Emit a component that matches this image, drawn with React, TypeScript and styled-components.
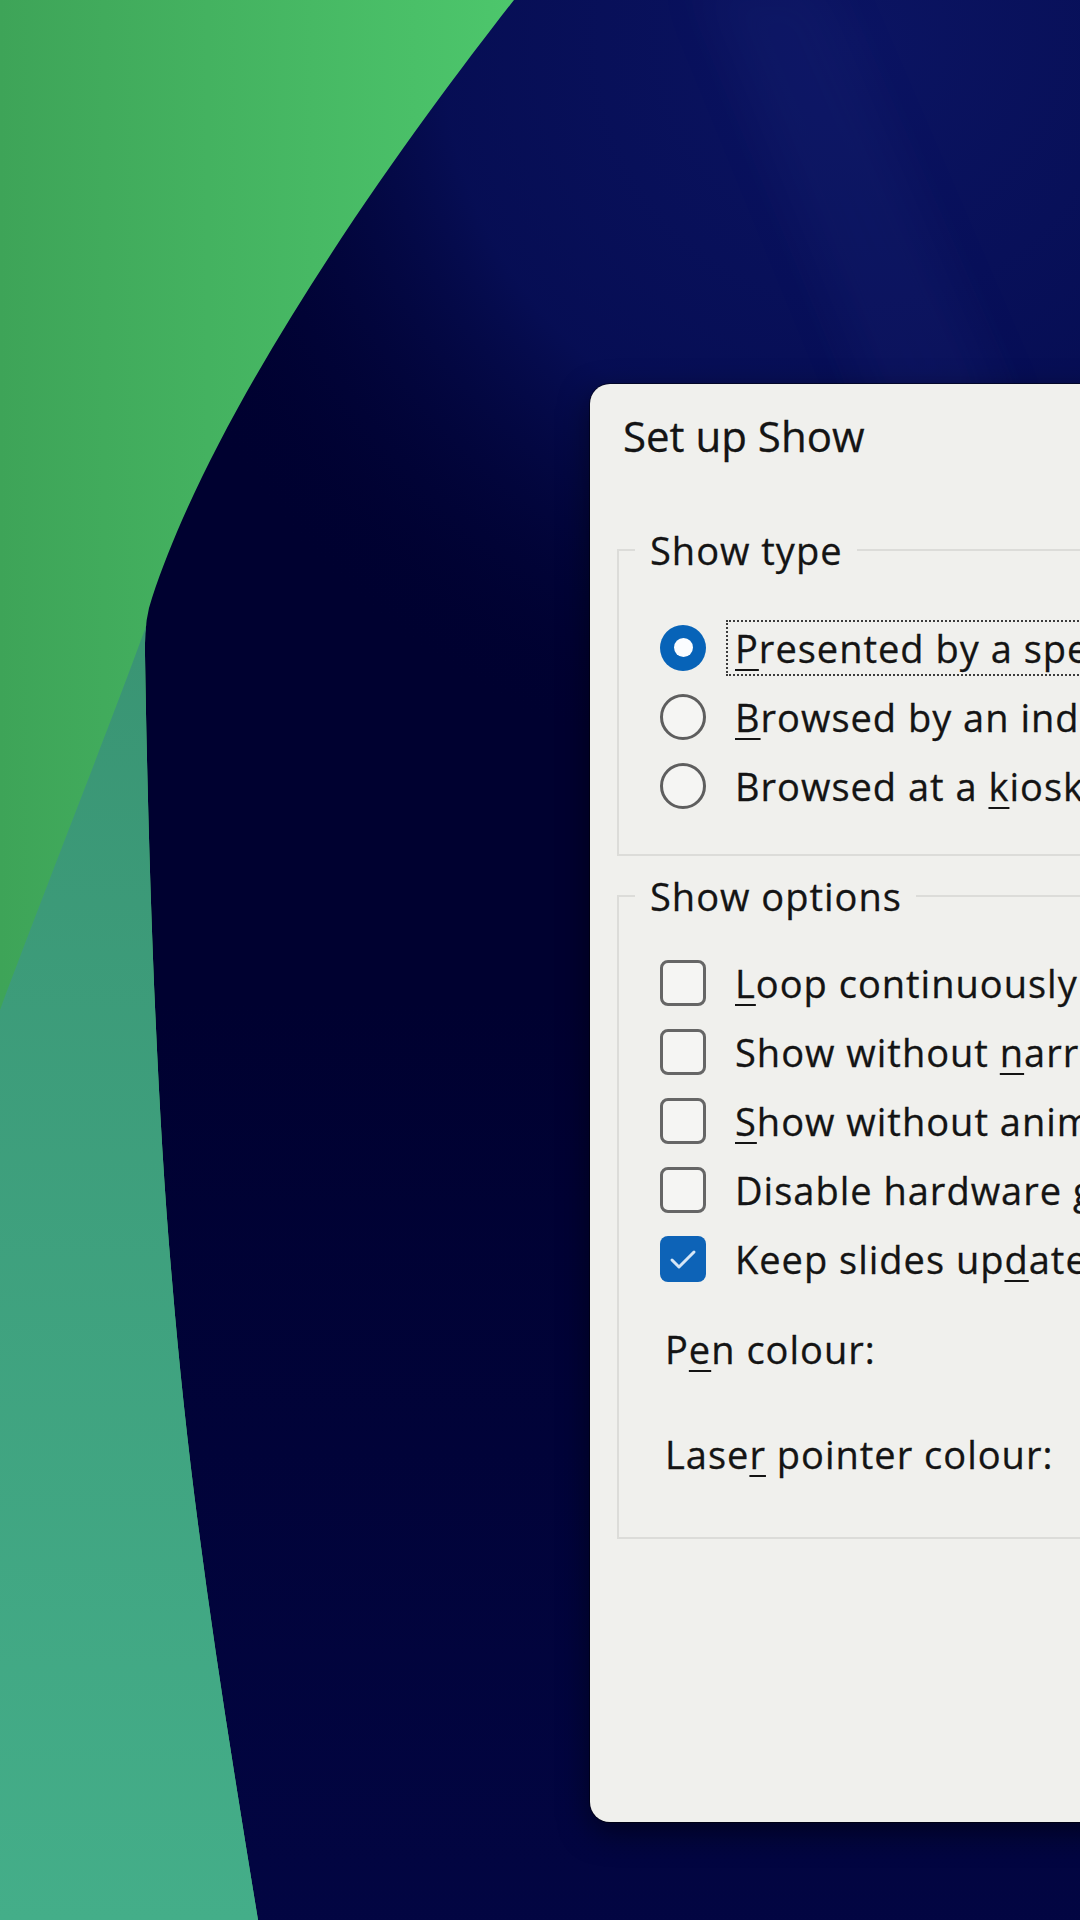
import React from 'react';
import styled, { createGlobalStyle, css } from 'styled-components';

const GlobalStyle = createGlobalStyle`
  html, body {
    margin: 0;
    padding: 0;
    width: 1080px;
    height: 1920px;
    overflow: hidden;
    background: #000130;
  }
  body {
    font-family: "Open Sans", "Noto Sans", sans-serif;
  }
`;

const Desktop = styled.div`
  position: relative;
  width: 1080px;
  height: 1920px;
  overflow: hidden;
  box-sizing: border-box;
  padding: 384px 0 0 590px;
`;

const Wallpaper = styled.svg`
  position: absolute;
  inset: 0;
  width: 1080px;
  height: 1920px;
  z-index: 0;
`;

const Dialog = styled.div`
  position: relative;
  z-index: 1;
  width: 760px;
  height: 1438px;
  box-sizing: border-box;
  padding: 24px 0 0 27px;
  display: flex;
  flex-direction: column;
  background: #f0f0ed;
  border-radius: 20px;
  color: #141414;
  -webkit-text-stroke: 0.3px #141414;
  box-shadow: 0 0 0 1px rgba(0, 0, 0, 0.45), 0 10px 30px rgba(0, 0, 0, 0.5);
`;

const Title = styled.div`
  padding-left: 6px;
  height: 56px;
  font-size: 42px;
  line-height: 56px;
  white-space: nowrap;
`;

const GroupBox = styled.fieldset<{ $top: number }>`
  margin: ${(p) => p.$top}px 27px 0 0;
  padding: 0;
  min-width: 0;
  border: 2px solid #dcdcd9;
`;

const GroupTitle = styled.legend`
  margin-left: 16px;
  padding: 0 14px 0 15px;
  font-size: 38px;
  line-height: 48px;
  letter-spacing: 1px;
  white-space: nowrap;
`;

const OptionList = styled.div<{ $pad: string }>`
  display: flex;
  flex-direction: column;
  padding: ${(p) => p.$pad};
`;

const OptionRow = styled.div`
  display: flex;
  align-items: center;
  height: 69px;
`;

const RadioMark = styled.span<{ $checked?: boolean }>`
  flex: none;
  width: 46px;
  height: 46px;
  box-sizing: border-box;
  border-radius: 50%;
  display: flex;
  align-items: center;
  justify-content: center;
  ${(p) =>
    p.$checked
      ? css`
          background: #0763b8;
          &::after {
            content: '';
            width: 19px;
            height: 19px;
            border-radius: 50%;
            background: #fbfdff;
          }
        `
      : css`
          background: #f5f5f3;
          border: 3px solid #5e5e5e;
        `}
`;

const CheckMark = styled.span<{ $checked?: boolean }>`
  flex: none;
  width: 46px;
  height: 46px;
  box-sizing: border-box;
  border-radius: 8px;
  display: flex;
  align-items: center;
  justify-content: center;
  ${(p) =>
    p.$checked
      ? css`
          background: #0d63b7;
        `
      : css`
          background: #f5f5f3;
          border: 3px solid #666;
        `}
`;

const OptionLabel = styled.span<{ $focused?: boolean }>`
  margin-left: 20px;
  padding: 2px 7px;
  border: 2px dotted ${(p) => (p.$focused ? '#3c3c3c' : 'transparent')};
  font-size: 38px;
  line-height: 48px;
  letter-spacing: 1px;
  white-space: nowrap;
`;

const Key = styled.u`
  text-decoration-thickness: 2px;
  text-underline-offset: 6px;
`;

const ColorList = styled.div`
  display: flex;
  flex-direction: column;
  gap: 36px;
  margin-top: 21px;
`;

const ColorRow = styled.div`
  display: flex;
  align-items: center;
  height: 69px;
  padding-left: 5px;
`;

const ColorLabel = styled.span`
  font-size: 38px;
  line-height: 48px;
  letter-spacing: 1px;
  white-space: nowrap;
`;

type Part = string | { key: string };

const renderText = (parts: Part[]) =>
  parts.map((p, i) => (typeof p === 'string' ? p : <Key key={i}>{p.key}</Key>));

const showTypes: { parts: Part[]; checked?: boolean }[] = [
  { parts: [{ key: 'P' }, 'resented by a speaker (full screen)'], checked: true },
  { parts: [{ key: 'B' }, 'rowsed by an individual (window)'] },
  { parts: ['Browsed at a ', { key: 'k' }, 'iosk (full screen)'] },
];

const showOptions: { parts: Part[]; checked?: boolean }[] = [
  { parts: [{ key: 'L' }, "oop continuously until 'Esc'"] },
  { parts: ['Show without ', { key: 'n' }, 'arration'] },
  { parts: [{ key: 'S' }, 'how without animation'] },
  { parts: ['Disable hardware ', { key: 'g' }, 'raphics acceleration'] },
  { parts: ['Keep slides up', { key: 'd' }, 'ated'], checked: true },
];

// edge between the green sweep and the navy part of the wallpaper
const greenEdge =
  'M0 0 L514 0 C420 120 220 390 152 598 Q144 620 145 655 C148 850 156 1100 172 1280 C190 1500 222 1700 258 1920 L0 1920 Z';

const Background = () => (
  <Wallpaper viewBox="0 0 1080 1920" xmlns="http://www.w3.org/2000/svg">
    <defs>
      <radialGradient id="topGlow" cx="860" cy="40" r="760" gradientUnits="userSpaceOnUse">
        <stop offset="0" stopColor="#0b1462" />
        <stop offset="0.55" stopColor="#070f58" stopOpacity="0.9" />
        <stop offset="1" stopColor="#000130" stopOpacity="0" />
      </radialGradient>
      <linearGradient id="bottomGlow" x1="0" y1="1000" x2="0" y2="1920" gradientUnits="userSpaceOnUse">
        <stop offset="0" stopColor="#03074a" stopOpacity="0" />
        <stop offset="1" stopColor="#03074a" stopOpacity="0.7" />
      </linearGradient>
      <linearGradient id="green" x1="0" y1="0" x2="520" y2="0" gradientUnits="userSpaceOnUse">
        <stop offset="0" stopColor="#3ea458" />
        <stop offset="1" stopColor="#4dc76c" />
      </linearGradient>
      <linearGradient id="teal" x1="0" y1="650" x2="0" y2="1920" gradientUnits="userSpaceOnUse">
        <stop offset="0" stopColor="#3a9574" />
        <stop offset="1" stopColor="#44ae89" />
      </linearGradient>
      <clipPath id="greenClip">
        <path d={greenEdge} />
      </clipPath>
      <filter id="soft" x="-20%" y="-20%" width="140%" height="140%">
        <feGaussianBlur stdDeviation="22" />
      </filter>
    </defs>
    <rect width="1080" height="1920" fill="#000130" />
    <rect width="1080" height="1920" fill="url(#topGlow)" />
    <rect width="1080" height="1920" fill="url(#bottomGlow)" />
    <polygon points="700,-20 820,-20 1010,420 880,420" fill="#1a2678" opacity="0.2" filter="url(#soft)" />
    <path d={greenEdge} fill="url(#green)" />
    <path
      d="M150 615 C120 700 60 850 0 1010 L0 1920 L400 1920 L400 615 Z"
      fill="url(#teal)"
      clipPath="url(#greenClip)"
    />
  </Wallpaper>
);

const App = () => {
  return (
    <>
      <GlobalStyle />
      <Desktop>
        <Background />
        <Dialog>
          <Title>Set up Show</Title>
          <GroupBox $top={62}>
            <GroupTitle>Show type</GroupTitle>
            <OptionList $pad="39px 0 34px 41px">
              {showTypes.map((item, i) => (
                <OptionRow key={i}>
                  <RadioMark $checked={item.checked} />
                  <OptionLabel $focused={item.checked}>{renderText(item.parts)}</OptionLabel>
                </OptionRow>
              ))}
            </OptionList>
          </GroupBox>
          <GroupBox $top={16}>
            <GroupTitle>Show options</GroupTitle>
            <OptionList $pad="28px 0 49px 41px">
              {showOptions.map((item, i) => (
                <OptionRow key={i}>
                  <CheckMark $checked={item.checked}>
                    {item.checked && (
                      <svg width="46" height="46" viewBox="0 0 46 46">
                        <path
                          d="M12 24 L19 31 L34 16"
                          fill="none"
                          stroke="#d6e6f6"
                          strokeWidth="3"
                          strokeLinecap="round"
                          strokeLinejoin="round"
                        />
                      </svg>
                    )}
                  </CheckMark>
                  <OptionLabel>{renderText(item.parts)}</OptionLabel>
                </OptionRow>
              ))}
              <ColorList>
                <ColorRow>
                  <ColorLabel>{renderText(['P', { key: 'e' }, 'n colour:'])}</ColorLabel>
                </ColorRow>
                <ColorRow>
                  <ColorLabel>{renderText(['Lase', { key: 'r' }, ' pointer colour:'])}</ColorLabel>
                </ColorRow>
              </ColorList>
            </OptionList>
          </GroupBox>
        </Dialog>
      </Desktop>
    </>
  );
};

export default App;
